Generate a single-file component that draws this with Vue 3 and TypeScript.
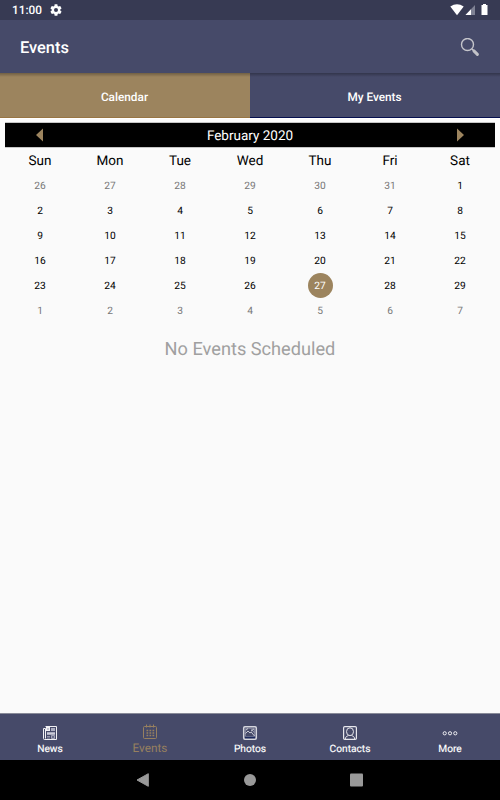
<script setup lang="ts">
interface Day { n: number; muted: boolean; selected: boolean }

const weekdays: string[] = ['Sun', 'Mon', 'Tue', 'Wed', 'Thu', 'Fri', 'Sat']

// February 2020 with the surrounding days, starting on Sunday 26 January.
const days: Day[] = Array.from({ length: 42 }, (_, i) => {
  const d = new Date(2020, 0, 26 + i)
  const inMonth = d.getMonth() === 1
  return { n: d.getDate(), muted: !inMonth, selected: inMonth && d.getDate() === 27 }
})
</script>

<template>
  <div class="screen">
    <div class="status">
      <span class="clock">11:00</span>
      <svg class="gear" width="12" height="12" viewBox="1.500 1.500 21 21">
        <path fill="#fff" d="M19.43 12.98c.04-.32.07-.64.07-.98s-.03-.66-.07-.98l2.11-1.65c.19-.15.24-.42.12-.64l-2-3.46c-.12-.22-.39-.3-.61-.22l-2.49 1c-.52-.4-1.080-.73-1.690-.98l-.38-2.650A.49.49 0 0 0 14 2h-4c-.25 0-.46.18-.49.42l-.38 2.650c-.61.25-1.170.59-1.690.98l-2.490-1c-.23-.09-.49 0-.61.22l-2 3.460c-.13.22-.07.49.12.64l2.110 1.650c-.04.32-.07.65-.07.98s.03.66.07.98l-2.110 1.650c-.19.15-.24.42-.12.64l2 3.460c.12.22.39.3.61.22l2.490-1c.52.4 1.080.73 1.690.98l.38 2.650c.03.24.24.42.49.42h4c.25 0 .46-.18.49-.42l.38-2.650c.61-.25 1.170-.59 1.690-.98l2.490 1c.23.09.49 0 .61-.22l2-3.460c.12-.22.07-.49-.12-.64zM12 15.500a3.500 3.500 0 1 1 0-7 3.500 3.500 0 0 1 0 7z" />
      </svg>
      <svg class="signals" width="40" height="12" viewBox="0 0 40 12">
        <path fill="#fff" d="M.3 2.500Q7-2.200 13.700 2.500L7 11.200z" />
        <path fill="#7f8294" d="M25 1v10H15.500z" />
        <path fill="#fff" d="M21 5.200V11h-5.500z" />
        <path fill="#fff" d="M31.500 1h1.500V0h3v1h1.500v10h-6z" />
      </svg>
    </div>

    <header class="appbar">
      <h1>Events</h1>
      <svg width="20" height="20" viewBox="0 0 20 20" fill="none">
        <circle cx="7.500" cy="6.500" r="6" stroke="#c5c5cb" stroke-width="1.400" />
        <path d="M11.900 11l1.400 1.300" stroke="#c5c5cb" stroke-width="1.400" />
        <path d="M13.900 12.900l3.500 3.500" stroke="#c2c2c8" stroke-width="3" stroke-linecap="round" />
      </svg>
    </header>

    <div class="tabs">
      <div class="tab active">Calendar</div>
      <div class="tab">My Events</div>
    </div>

    <main>
      <div class="month">
        <svg width="8" height="14" viewBox="0 0 8 14"><path fill="#9c845e" d="M7 .5v13L0 7z" /></svg>
        <span>February 2020</span>
        <svg width="8" height="14" viewBox="0 0 8 14"><path fill="#9c845e" d="M1 .5v13l7-6.500z" /></svg>
      </div>
      <div class="grid weekdays">
        <div v-for="w in weekdays" :key="w">{{ w }}</div>
      </div>
      <div class="grid days">
        <div v-for="(d, i) in days" :key="i" class="day" :class="{ muted: d.muted, selected: d.selected }">
          <span>{{ d.n }}</span>
        </div>
      </div>
      <p class="empty">No Events Scheduled</p>
    </main>

    <nav class="bottom">
      <div class="item">
        <svg width="16" height="16" viewBox="0 0 16 16" fill="none" stroke="#f0f0f4">
          <path d="M3.500 1.500h11v13h-12a1 1 0 0 1-1-1v-10h2v10" />
          <path d="M4 2h4v4H4z" fill="#f0f0f4" stroke="none" />
          <path d="M5.500 3.500h1v1h-1z" fill="#464a69" stroke="none" />
          <path d="M9 3h4v3H9zM5 7h8v3H5z" fill="#aaacbf" stroke="none" />
          <path d="M5 8.500h8" stroke="#d3d4de" stroke-width=".8" />
          <path d="M5 11.500h3M5 13h3" stroke="#9496ae" />
          <path d="M9.500 10.500h3v3h-3z" fill="#696d8b" stroke="#b5b7c7" stroke-width=".8" />
        </svg>
        <span>News</span>
      </div>
      <div class="item current">
        <svg width="16" height="16" viewBox="0 0 16 16" fill="none" stroke="#97805f">
          <rect x="1.500" y="2.500" width="13" height="12" rx="1" />
          <path d="M4.500.5v3M8 .5v3M11.500.5v3" />
          <path d="M4.500 6.500h8M4.500 9h8M4.500 11.500h8" stroke-width="1.400" stroke-dasharray="1.700 1.300" />
        </svg>
        <span>Events</span>
      </div>
      <div class="item">
        <svg width="16" height="16" viewBox="0 0 16 16" fill="none" stroke="#d5d6de">
          <rect x="1.700" y="1.700" width="12.600" height="12.600" rx="1.200" stroke-width="1.500" />
          <path d="M3.500 11.500v-8h9v8z" stroke="#9da0b6" stroke-width=".6" />
          <path d="M3.500 8.500l2.500-2.500 2 2 1.200-1 3.300 4M9 6l3-2M4 5l2-1.500" stroke-width=".9" />
          <path d="M9.500 4l2.500 3.500" stroke-width=".6" />
          <path d="M3 12.500h10" stroke="#1b285d" stroke-width="1.500" />
        </svg>
        <span>Photos</span>
      </div>
      <div class="item">
        <svg width="16" height="16" viewBox="0 0 16 16" fill="none" stroke="#e7e7ed">
          <rect x="1.600" y="1.600" width="12.800" height="12.800" rx="1.200" stroke-width="1.200" />
          <ellipse cx="8" cy="6.700" rx="3.500" ry="3.900" />
          <path d="M3.300 14c.2-2.100 1.100-2.600 3.200-3.500M12.700 14c-.2-2.100-1.100-2.600-3.200-3.500" />
        </svg>
        <span>Contacts</span>
      </div>
      <div class="item">
        <svg width="16" height="16" viewBox="0 0 16 16" fill="none" stroke="#f0f0f4">
          <circle cx="2.700" cy="8.300" r="1.600" /><circle cx="8" cy="8.300" r="1.600" /><circle cx="13.300" cy="8.300" r="1.600" />
        </svg>
        <span>More</span>
      </div>
    </nav>

    <div class="system">
      <svg width="14" height="14" viewBox="0 0 14 14"><path d="M12.300.7v12.600L1 7z" fill="#999" stroke="#999" stroke-linejoin="round" /></svg>
      <svg width="14" height="14" viewBox="0 0 14 14"><circle cx="7" cy="7" r="6" fill="#999" /></svg>
      <svg width="14" height="14" viewBox="0 0 14 14"><rect x="0" y=".5" width="13" height="13" rx="1" fill="#999" /></svg>
    </div>
  </div>
</template>

<style>
body { margin: 0; }
</style>

<style scoped>
.screen {
  width: 500px;
  height: 800px;
  display: flex;
  flex-direction: column;
  overflow: hidden;
  background: #fafafa;
  color: #000;
  font-family: Roboto, sans-serif;
  text-rendering: geometricPrecision;
}
svg { display: block; flex: none; }
.status {
  height: 20px;
  flex: none;
  box-sizing: border-box;
  display: flex;
  align-items: center;
  padding: 0 0 0 12px;
  background: #373a53;
  color: #fff;
}
.clock { font-size: 11.800px; font-weight: 500; line-height: 20px; width: 38px; }
.signals { margin-left: auto; margin-right: 10px; }
.appbar {
  height: 53px;
  flex: none;
  box-sizing: border-box;
  display: flex;
  align-items: center;
  justify-content: space-between;
  padding: 2px 20px 0;
  background: #464a69;
  color: #fff;
}
h1 { margin: 0; padding-top: 2px; font-size: 16.400px; font-weight: 500; line-height: 20px; }
.tabs {
  height: 45px;
  flex: none;
  display: grid;
  grid-template-columns: 1fr 1fr;
}
.tab {
  display: flex;
  align-items: center;
  justify-content: center;
  background: linear-gradient(rgba(0, 0, 0, .28), rgba(0, 0, 0, 0) 4px), #464a69;
  border-bottom: 1px solid #06104f;
  color: #fff;
  font-size: 11.800px;
  font-weight: 500;
  padding: 3px 1px 0 0;
  box-sizing: border-box;
}
.tab.active {
  background: linear-gradient(rgba(0, 0, 0, .28), rgba(0, 0, 0, 0) 4px), #9c845e;
  border-bottom-color: #987543;
}
main { flex: 1; padding: 4px 5px 0; border-top: 1px solid #fff; }
.month {
  height: 24px;
  display: flex;
  align-items: center;
  justify-content: space-between;
  padding: 0 31px;
  background: #000;
  outline: 1px solid #c6c6c6;
  clip-path: inset(-1px 0);
  color: #fff;
  font-size: 13.500px;
}
.month span { padding-top: 1px; }
.grid { display: grid; grid-template-columns: repeat(7, 1fr); text-align: center; }
.weekdays { height: 26px; font-size: 13.500px; line-height: 28px; }
.days { grid-auto-rows: 25px; font-size: 10.200px; }
.day { display: flex; align-items: center; justify-content: center; }
.day span { box-sizing: border-box; width: 25px; height: 25px; padding-top: 1px; line-height: 25px; border-radius: 50%; }
.muted { color: #777; }
.selected span { background: #9c845e; color: #fff; }
.empty { margin: 15px 0 0; text-align: center; color: #a0a0a0; font-size: 18.200px; line-height: 24px; }
.bottom {
  height: 47px;
  flex: none;
  box-sizing: border-box;
  display: grid;
  grid-template-columns: repeat(5, 1fr);
  border-top: 1px solid #888a98;
  background: #464a69;
  color: #fff;
}
.item { display: flex; flex-direction: column; align-items: center; padding-top: 11px; font-size: 10.200px; font-weight: 400; }
.item span { line-height: 18px; -webkit-text-stroke: .15px currentColor; }
.current { padding-top: 10px; color: #97805f; font-size: 11.800px; }
.item.current span { line-height: 16px; -webkit-text-stroke: 0; }
.system { height: 40px; flex: none; display: flex; align-items: center; justify-content: center; gap: 93px; background: #000; }
</style>
